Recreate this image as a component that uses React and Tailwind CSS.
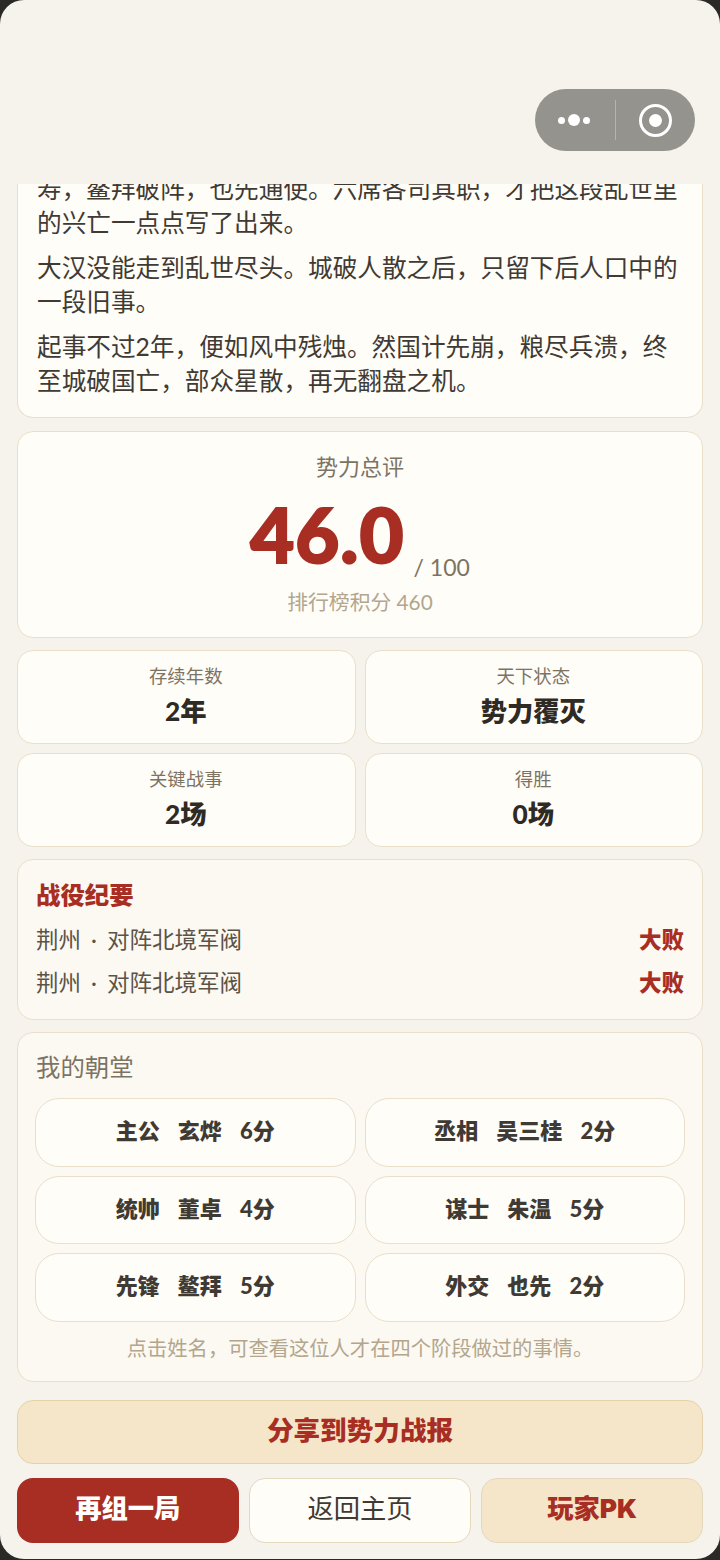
import React from "react";

const FONT = "font-['Lato','Noto_Sans_CJK_SC',sans-serif]";
const HEAVY = "font-black";

const stats = [
  { label: "存续年数", value: "2年" },
  { label: "天下状态", value: "势力覆灭" },
  { label: "关键战事", value: "2场" },
  { label: "得胜", value: "0场" },
];

const battles = [
  { place: "荆州", foe: "对阵北境军阀", result: "大败" },
  { place: "荆州", foe: "对阵北境军阀", result: "大败" },
];

const court = [
  { role: "主公", name: "玄烨", score: "6分" },
  { role: "丞相", name: "吴三桂", score: "2分" },
  { role: "统帅", name: "董卓", score: "4分" },
  { role: "谋士", name: "朱温", score: "5分" },
  { role: "先锋", name: "鳌拜", score: "5分" },
  { role: "外交", name: "也先", score: "2分" },
];

// wechat mini program capsule
function Capsule() {
  return (
    <div className="absolute left-[535px] top-[89px] flex h-[62px] w-[160px] items-center rounded-full bg-[#94938e]">
      <div className="flex w-[80px] items-center justify-center gap-[3px] pr-[2px]">
        <span className="h-[7px] w-[7px] rounded-full bg-white" />
        <span className="h-[12px] w-[12px] rounded-full bg-white" />
        <span className="h-[7px] w-[7px] rounded-full bg-white" />
      </div>
      <div className="h-[40px] w-[1px] bg-[#b5b4af]" />
      <div className="flex flex-1 items-center justify-center">
        <div className="flex h-[33px] w-[33px] items-center justify-center rounded-full border-[3px] border-white">
          <span className="h-[13px] w-[13px] rounded-full bg-white" />
        </div>
      </div>
    </div>
  );
}

export default function App() {
  return (
    <div className={`${FONT} relative h-[1560px] w-[720px] overflow-hidden bg-[#2b2925]`}>
      <div className="relative flex h-[1559px] flex-col overflow-hidden rounded-[24px] bg-[#f6f3ec] px-[17px]">
        <Capsule />
        <div className="h-[184px] shrink-0" />

        {/* story card, scrolled under the nav bar */}
        <div className="h-[234px] shrink-0 overflow-hidden rounded-b-[16px] border-x border-b border-[#e9dfcb] bg-[#fffdf8] pl-[19px] pr-[20px] text-[24.65px] leading-[34px] text-[#3f3a33]">
          <div className="-mt-[12px] flex flex-col gap-[11px]">
            <p>寿，鳌拜破阵，也先通使。六席各司其职，才把这段乱世里的兴亡一点点写了出来。</p>
            <p>大汉没能走到乱世尽头。城破人散之后，只留下后人口中的一段旧事。</p>
            <p>起事不过2年，便如风中残烛。然国计先崩，粮尽兵溃，终至城破国亡，部众星散，再无翻盘之机。</p>
          </div>
        </div>

        {/* score */}
        <div className="mt-[13px] flex h-[207px] shrink-0 flex-col items-center rounded-[16px] border border-[#e9dfcb] bg-[#fffdf8] pt-[19px]">
          <div className="text-[22px] leading-[32px] text-[#7d7363]">势力总评</div>
          <div className="mt-[7px] flex items-end">
            <span className="text-[76px] font-black leading-[88px] tracking-[1px] text-[#a82e24] [-webkit-text-stroke:2px_#a82e24]">46.0</span>
            <span className="-mb-[4px] ml-[9px] text-[23px] leading-[30px] text-[#7d7363]">/ 100</span>
          </div>
          <div className="mt-[9px] text-[20.8px] leading-[30px] text-[#b3a68d]">排行榜积分 460</div>
        </div>

        {/* stats */}
        <div className="mt-[12px] grid shrink-0 grid-cols-2 gap-x-[9px] gap-y-[9px]">
          {stats.map((s) => (
            <div key={s.label} className="flex h-[94px] flex-col items-center rounded-[16px] border border-[#e9dfcb] bg-[#fffdf8] pr-[1px] pt-[12px]">
              <div className="text-[18.4px] leading-[26px] text-[#7d7363]">{s.label}</div>
              <div className={`${HEAVY} mt-[4px] text-[26.3px] leading-[36px] text-[#2f2a24]`}>{s.value}</div>
            </div>
          ))}
        </div>

        {/* battles */}
        <div className="mt-[12px] h-[161px] shrink-0 rounded-[16px] border border-[#e9dfcb] bg-[#fcf9f2] pl-[18px] pr-[18px] pt-[19px]">
          <div className={`${HEAVY} text-[24.4px] leading-[32px] text-[#a82e24]`}>战役纪要</div>
          <div className="mt-[13px] flex flex-col gap-[11px]">
            {battles.map((b, i) => (
              <div key={i} className="flex items-center justify-between text-[22.5px] leading-[32px]">
                <span className="text-[#5b5346]">
                  {b.place}
                  <span className="mx-[10px]">·</span>
                  {b.foe}
                </span>
                <span className={`${HEAVY} text-[#a82e24]`}>{b.result}</span>
              </div>
            ))}
          </div>
        </div>

        {/* court */}
        <div className="mt-[12px] h-[350px] shrink-0 rounded-[16px] border border-[#e9dfcb] bg-[#fcf9f2] px-[17px] pt-[18px]">
          <div className="pl-[1px] text-[24.4px] leading-[32px] text-[#7d7363]">我的朝堂</div>
          <div className="mt-[15px] grid grid-cols-2 gap-x-[9px] gap-y-[9px]">
            {court.map((c) => (
              <div key={c.role} className={`${HEAVY} flex h-[68.5px] items-center justify-center gap-[18px] rounded-[24px] border border-[#e9dfcb] bg-[#fffdf8] pb-[3px] text-[22px] text-[#3f3a33]`}>
                <span>{c.role}</span>
                <span>{c.name}</span>
                <span>{c.score}</span>
              </div>
            ))}
          </div>
          <div className="mt-[11px] text-center text-[20.3px] leading-[30px] text-[#b3a68d]">点击姓名，可查看这位人才在四个阶段做过的事情。</div>
        </div>

        <button className={`${HEAVY} mt-[18px] h-[64px] shrink-0 rounded-[16px] border border-[#e4d2aa] bg-[#f5e6c9] pb-[3px] text-[26.6px] text-[#a82e24]`}>分享到势力战报</button>

        <div className="mt-[14px] grid h-[65px] shrink-0 grid-cols-3 gap-[10.5px]">
          <button className={`${HEAVY} rounded-[16px] bg-[#a82e24] pb-[3px] text-[26.3px] text-white`}>再组一局</button>
          <button className="rounded-[16px] border border-[#e4d8bd] bg-[#fffdf8] pb-[3px] text-[26.3px] text-[#3f3a33]">返回主页</button>
          <button className="rounded-[16px] border border-[#e4d8bd] bg-[#f5e6c9] pb-[3px] font-['Inter','Noto_Sans_CJK_SC',sans-serif] text-[26.3px] font-black text-[#a82e24]">玩家PK</button>
        </div>
      </div>
    </div>
  );
}
